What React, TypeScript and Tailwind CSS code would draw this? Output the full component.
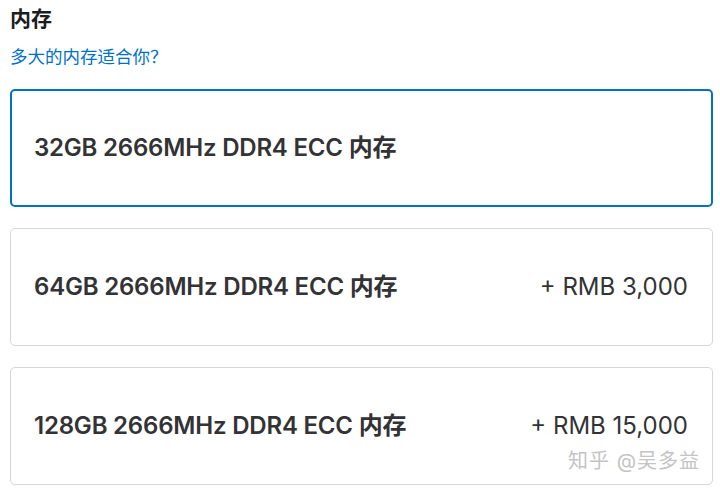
import React from 'react';

const options = [
  { label: '32GB 2666MHz DDR4 ECC 内存', price: '', selected: true },
  { label: '64GB 2666MHz DDR4 ECC 内存', price: '+ RMB 3,000', selected: false },
  { label: '128GB 2666MHz DDR4 ECC 内存', price: '+ RMB 15,000', selected: false },
];

export default function App() {
  return (
    <div
      className="relative w-[720px] h-[495px] bg-white overflow-hidden pl-[10px] pr-[7px] pt-[6px] select-none"
      style={{ fontFamily: 'Inter, "Noto Sans CJK SC", sans-serif' }}
    >
      {/* Section heading */}
      <h2 className="text-[21px] leading-[26px] font-bold text-[#1d1d1f]">内存</h2>
      <a className="block mt-[14px] text-[17.5px] leading-[22px] text-[#0070c9]">多大的内存适合你？</a>

      {/* Options */}
      <div className="flex flex-col gap-[21px] mt-[21px]">
        {options.map((opt) => (
          <div
            key={opt.label}
            className={`h-[118px] rounded-[5px] flex items-center justify-between text-[#333336]
              ${opt.selected ? 'border-2 border-[#0070c9] pl-[22px] pr-[23px]' : 'border border-[#d6d6d6] pl-[23px] pr-[24px]'}`}
          >
            <span className="text-[24px] font-semibold tracking-[-0.2px]">{opt.label}</span>
            {opt.price && <span className="text-[24px] font-normal">{opt.price}</span>}
          </div>
        ))}
      </div>

      {/* Watermark */}
      <div
        className="absolute right-[20px] bottom-[19px] text-[20px] text-[#c4c4c4] tracking-[1px]"
        style={{ textShadow: '0 0 2px #fff, 0 0 2px #fff' }}
      >
        知乎 @吴多益
      </div>
    </div>
  );
}
